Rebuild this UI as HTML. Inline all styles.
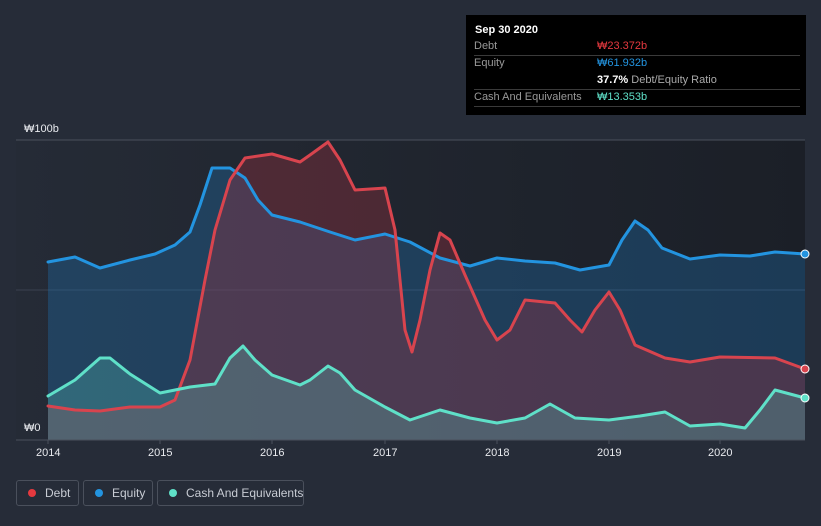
<!DOCTYPE html>
<html><head><meta charset="utf-8"><style>
body{margin:0;width:821px;height:526px;background:#262c38;font-family:"Liberation Sans",sans-serif;overflow:hidden;position:relative}
.tt{position:absolute;left:466px;top:15px;width:340px;height:100px;background:#000;color:#fff;font-size:11px}
.tt .r{position:absolute;left:8px;right:6px;height:17px;border-bottom:1px solid #3a3a3a;line-height:17px;color:#999}
.tt b{font-weight:bold}
.lg{position:absolute;top:480px;height:26px;border:1px solid #4a505c;border-radius:3px;color:#c8ccd4;font-size:12px;line-height:24px;box-sizing:border-box;white-space:nowrap}
.lg i{position:absolute;left:11px;top:8px;width:8px;height:8px;border-radius:50%}
.ax{position:absolute;color:#e8eaee;font-size:11px}
</style></head><body>
<svg width="821" height="526" style="position:absolute;left:0;top:0">
<defs><linearGradient id="bg" x1="0" x2="1" y1="0" y2="0"><stop offset="0" stop-color="#252b36"/><stop offset="1" stop-color="#1b1f27"/></linearGradient></defs>
<rect x="16" y="140" width="789" height="300" fill="url(#bg)"/>
<line x1="16" y1="140" x2="805" y2="140" stroke="#4a505c"/>
<line x1="16" y1="290" x2="805" y2="290" stroke="#3a4250"/>
<polygon fill="#1f6fb0" fill-opacity="0.35" points="48,440 48,262 75,257 100,268 130,260 155,254 175,245 190,232 200,205 212,168 230,168 245,178 258,200 272,215 300,222 330,232 355,240 385,234 410,242 440,258 470,266 497,258 525,261 555,263 580,270 609,265 622,240 635,221 648,230 662,248 690,259 720,255 750,256 775,252 805,254 805,440"/>
<polygon fill="#a03040" fill-opacity="0.35" points="48,440 48,406 75,410 100,411 130,407 160,407 175,400 190,360 205,280 215,230 230,180 245,158 272,154 300,162 310,155 328,142 340,160 355,190 385,188 395,230 405,330 412,352 420,320 430,270 440,233 450,240 465,275 485,320 497,340 510,330 525,300 555,303 570,320 582,332 595,310 609,292 620,310 635,345 665,358 690,362 720,357 775,358 805,369 805,440"/>
<polygon fill="#5fd8c8" fill-opacity="0.25" points="48,440 48,396 75,380 100,358 110,358 130,374 160,393 175,390 190,387 215,384 230,358 243,346 255,360 272,375 300,385 310,380 328,366 340,373 355,390 385,407 410,420 440,410 470,418 497,423 525,418 550,404 575,418 609,420 640,416 665,412 690,426 720,424 745,428 760,410 775,390 805,398 805,440"/>
<g fill="none" stroke-width="3" stroke-linejoin="round" stroke-linecap="round">
<polyline stroke="#2394e0" points="48,262 75,257 100,268 130,260 155,254 175,245 190,232 200,205 212,168 230,168 245,178 258,200 272,215 300,222 330,232 355,240 385,234 410,242 440,258 470,266 497,258 525,261 555,263 580,270 609,265 622,240 635,221 648,230 662,248 690,259 720,255 750,256 775,252 805,254"/>
<polyline stroke="#d8444e" points="48,406 75,410 100,411 130,407 160,407 175,400 190,360 205,280 215,230 230,180 245,158 272,154 300,162 310,155 328,142 340,160 355,190 385,188 395,230 405,330 412,352 420,320 430,270 440,233 450,240 465,275 485,320 497,340 510,330 525,300 555,303 570,320 582,332 595,310 609,292 620,310 635,345 665,358 690,362 720,357 775,358 805,369"/>
<polyline stroke="#5fe0c8" points="48,396 75,380 100,358 110,358 130,374 160,393 175,390 190,387 215,384 230,358 243,346 255,360 272,375 300,385 310,380 328,366 340,373 355,390 385,407 410,420 440,410 470,418 497,423 525,418 550,404 575,418 609,420 640,416 665,412 690,426 720,424 745,428 760,410 775,390 805,398"/>
</g>
<line x1="16" y1="440" x2="805" y2="440" stroke="#4a505c"/>
<g stroke="#4a505c"><line x1="48" y1="440" x2="48" y2="444"/><line x1="160" y1="440" x2="160" y2="444"/><line x1="272" y1="440" x2="272" y2="444"/><line x1="385" y1="440" x2="385" y2="444"/><line x1="497" y1="440" x2="497" y2="444"/><line x1="609" y1="440" x2="609" y2="444"/><line x1="720" y1="440" x2="720" y2="444"/></g>
<circle cx="805" cy="254" r="4" fill="#2394e0" stroke="#fff"/>
<circle cx="805" cy="369" r="4" fill="#d8444e" stroke="#fff"/>
<circle cx="805" cy="398" r="4" fill="#5fe0c8" stroke="#fff"/>
</svg>
<div class="ax" style="left:24px;top:123px">₩100b</div>
<div class="ax" style="left:24px;top:422px">₩0</div>
<div class="ax" style="left:36px;top:447px">2014</div>
<div class="ax" style="left:148px;top:447px">2015</div>
<div class="ax" style="left:260px;top:447px">2016</div>
<div class="ax" style="left:373px;top:447px">2017</div>
<div class="ax" style="left:485px;top:447px">2018</div>
<div class="ax" style="left:597px;top:447px">2019</div>
<div class="ax" style="left:708px;top:447px">2020</div>
<div class="tt">
<div style="position:absolute;left:9px;top:9px;font-weight:bold">Sep 30 2020</div>
<div class="r" style="top:23px">Debt<span style="position:absolute;left:123px;color:#e5393f">₩23.372b</span></div>
<div class="r" style="top:40px;border:none">Equity<span style="position:absolute;left:123px;color:#2394e0">₩61.932b</span></div>
<div class="r" style="top:57px"><span style="position:absolute;left:123px;color:#aaa"><b style="color:#fff">37.7%</b> Debt/Equity Ratio</span></div>
<div class="r" style="top:74px">Cash And Equivalents<span style="position:absolute;left:123px;color:#5fe0c8">₩13.353b</span></div>
</div>
<div class="lg" style="left:16px;width:63px"><i style="background:#e5393f"></i><span style="position:absolute;left:28px">Debt</span></div>
<div class="lg" style="left:83px;width:70px"><i style="background:#2394e0"></i><span style="position:absolute;left:28px">Equity</span></div>
<div class="lg" style="left:157px;width:147px"><i style="background:#5fe0c8"></i><span style="position:absolute;left:28px">Cash And Equivalents</span></div>
</body></html>
